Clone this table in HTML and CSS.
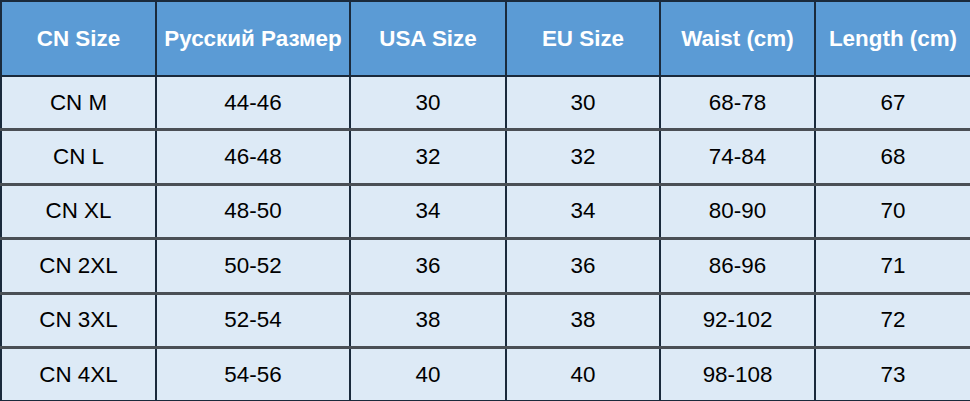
FILE: index.html
```html
<!DOCTYPE html>
<html>
<head>
<meta charset="utf-8">
<link rel="stylesheet" href="styles.css">
</head>
<body>
<table class="sizes">
  <colgroup>
    <col class="c1"><col class="c2"><col class="c3"><col class="c4"><col class="c5"><col class="c6">
  </colgroup>
  <thead>
    <tr><th>CN Size</th><th>Русский Размер</th><th>USA Size</th><th>EU Size</th><th>Waist (cm)</th><th>Length (cm)</th></tr>
  </thead>
  <tbody>
    <tr><td>CN M</td><td>44-46</td><td>30</td><td>30</td><td>68-78</td><td>67</td></tr>
    <tr><td>CN L</td><td>46-48</td><td>32</td><td>32</td><td>74-84</td><td>68</td></tr>
    <tr><td>CN XL</td><td>48-50</td><td>34</td><td>34</td><td>80-90</td><td>70</td></tr>
    <tr><td>CN 2XL</td><td>50-52</td><td>36</td><td>36</td><td>86-96</td><td>71</td></tr>
    <tr><td>CN 3XL</td><td>52-54</td><td>38</td><td>38</td><td>92-102</td><td>72</td></tr>
    <tr><td>CN 4XL</td><td>54-56</td><td>40</td><td>40</td><td>98-108</td><td>73</td></tr>
  </tbody>
</table>
</body>
</html>
```
FILE: styles.css
```css
html, body { margin: 0; padding: 0; background: #ffffff; }
body { width: 970px; height: 401px; overflow: hidden; }
.sizes {
  width: 970px;
  border-collapse: collapse;
  table-layout: fixed;
  font-family: "Liberation Sans", Arial, sans-serif;
  font-size: 22.4px;
  text-align: center;
  border: 2px solid #1a2a3c;
}
.c1 { width: 155px; }
.c2 { width: 194px; }
.c3 { width: 156px; }
.c4 { width: 154px; }
.c5 { width: 155px; }
.c6 { width: 156px; }
.sizes th {
  background: #5b9bd5;
  color: #ffffff;
  font-weight: bold;
  height: 73px;
  padding: 0;
  border-left: 2px solid #1a2a3c;
  border-bottom: 2px solid #1a2a3c;
}
.sizes td {
  background: #ddeaf6;
  color: #000000;
  height: 51.4px;
  padding: 0;
  border-left: 2px solid #1a2a3c;
  border-top: 3px solid #4a4f55;
}
.sizes tbody tr:first-child td { border-top: 2px solid #1a2a3c; }
```
